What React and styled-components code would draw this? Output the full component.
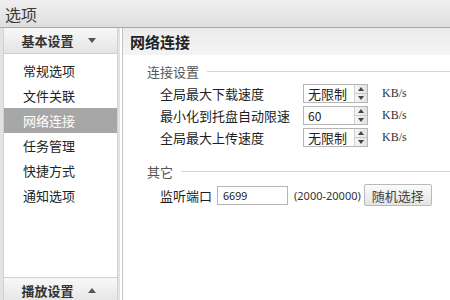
import React from 'react';
import styled, { createGlobalStyle } from 'styled-components';

const GlobalStyle = createGlobalStyle`
  html, body {
    margin: 0;
    padding: 0;
    background: #e2e2e2;
  }
  body {
    font-family: "Noto Sans CJK SC", "Noto Sans", sans-serif;
  }
`;

const Page = styled.div`
  width: 450px;
  height: 300px;
  overflow: hidden;
  display: flex;
  flex-direction: column;
`;

const TitleBar = styled.div`
  height: 27px;
  flex: none;
  display: flex;
  align-items: center;
  padding-left: 5px;
  font-size: 16px;
  color: #3a3a3a;
  background: linear-gradient(#efefef, #dedede);
  border-bottom: 1px solid #a8a8a8;
`;

const Main = styled.div`
  flex: 1;
  display: flex;
  padding-left: 3px;
  gap: 2px;
  overflow: hidden;
  background: #e2e2e2;
`;

const Sidebar = styled.div`
  width: 113px;
  height: 276px;
  flex: none;
  display: flex;
  flex-direction: column;
  background: #fff;
  border: 1px solid #d2d2d2;
  border-top: none;
`;

const GroupHeader = styled.div`
  height: 25px;
  flex: none;
  display: flex;
  align-items: center;
  justify-content: center;
  gap: 14px;
  font-size: 13px;
  font-weight: bold;
  color: #333;
  background: linear-gradient(#f8f8f8, #e4e4e4);
  border-top: ${p => (p.$bottom ? '1px solid #cfcfcf' : 'none')};
  border-bottom: 1px solid #cfcfcf;
  padding-right: 4px;
`;

const Arrow = styled.span`
  width: 0;
  height: 0;
  border-left: 4px solid transparent;
  border-right: 4px solid transparent;
  ${p => (p.$up ? 'border-bottom: 5px solid #555;' : 'border-top: 5px solid #555;')}
`;

const ItemList = styled.div`
  flex: 1;
  padding-top: 4px;
`;

const Item = styled.div`
  height: 25px;
  display: flex;
  align-items: center;
  padding-left: 19px;
  font-size: 13px;
  color: ${p => (p.$active ? '#fff' : '#222')};
  background: ${p => (p.$active ? '#a7a7a7' : 'transparent')};
`;

const Panel = styled.div`
  flex: 1;
  display: flex;
  flex-direction: column;
  background: #fff;
  border-left: 1px solid #c4c4c4;
  box-shadow: -2px 0 0 #fff;
  margin-left: 2px;
`;

const PanelHeader = styled.div`
  height: 27px;
  flex: none;
  display: flex;
  align-items: center;
  padding-left: 7px;
  font-size: 15px;
  font-weight: bold;
  color: #222;
  background: linear-gradient(#ebebeb, #f4f4f4);
`;

const PanelBody = styled.div`
  padding-left: 24px;
  display: flex;
  flex-direction: column;
`;

const Legend = styled.div`
  height: 16px;
  margin-top: ${p => p.$top}px;
  display: flex;
  align-items: center;
  gap: 8px;
  font-size: 13px;
  color: #555;
  &::after {
    content: '';
    flex: 1;
    height: 1px;
    background: #d6d6d6;
  }
`;

const Rows = styled.div`
  margin-top: 5px;
  padding-left: 13px;
  display: flex;
  flex-direction: column;
  gap: 3px;
`;

const Row = styled.div`
  height: 19px;
  display: flex;
  align-items: center;
`;

const Label = styled.span`
  width: 143px;
  font-size: 13px;
  color: #1e1e1e;
  white-space: nowrap;
`;

const SpinBox = styled.div`
  width: 63px;
  height: 17px;
  display: flex;
  border: 1px solid #b5b5b5;
  background: #fff;
`;

const SpinValue = styled.div`
  flex: 1;
  display: flex;
  align-items: center;
  padding-left: 4px;
  font-size: ${p => (p.$latin ? '12px' : '13px')};
  color: #222;
`;

const SpinButtons = styled.div`
  width: 12px;
  display: flex;
  flex-direction: column;
  border-left: 1px solid #d0d0d0;
  background: linear-gradient(90deg, #f6f6f6, #e2e2e2);
`;

const SpinHalf = styled.div`
  flex: 1;
  display: flex;
  align-items: center;
  justify-content: center;
  border-bottom: ${p => (p.$top ? '1px solid #c8c8c8' : 'none')};
`;

const Unit = styled.span`
  margin-left: 14px;
  font-family: "Liberation Serif", serif;
  font-size: 12px;
  color: #333;
`;

const PortRow = styled.div`
  margin-top: 5px;
  padding-left: 13px;
  height: 22px;
  display: flex;
  align-items: center;
`;

const PortLabel = styled.span`
  font-size: 13px;
  color: #1e1e1e;
  margin-right: 5px;
`;

const TextInput = styled.div`
  width: 64px;
  height: 17px;
  border: 1px solid #b5b5b5;
  display: flex;
  align-items: center;
  padding-left: 5px;
  font-size: 11px;
  color: #222;
`;

const Range = styled.span`
  margin-left: 6px;
  font-family: "Noto Sans", sans-serif;
  font-size: 11px;
  color: #333;
`;

const Button = styled.div`
  margin-left: 3px;
  height: 20px;
  padding: 0 7px;
  display: flex;
  align-items: center;
  font-size: 13px;
  color: #444;
  border: 1px solid #b9b9b9;
  border-radius: 2px;
  background: linear-gradient(#fbfbfb, #e4e4e4);
`;

const Tri = ({ up }) => (
  <svg width="6" height="4" viewBox="0 0 6 4">
    <path d={up ? 'M0 4 L3 0 L6 4 Z' : 'M0 0 L3 4 L6 0 Z'} fill="#444" />
  </svg>
);

const Spin = ({ value, latin }) => (
  <SpinBox>
    <SpinValue $latin={latin}>{value}</SpinValue>
    <SpinButtons>
      <SpinHalf $top>
        <Tri up />
      </SpinHalf>
      <SpinHalf>
        <Tri />
      </SpinHalf>
    </SpinButtons>
  </SpinBox>
);

const items = ['常规选项', '文件关联', '网络连接', '任务管理', '快捷方式', '通知选项'];

const speeds = [
  { label: '全局最大下载速度', value: '无限制' },
  { label: '最小化到托盘自动限速', value: '60', latin: true },
  { label: '全局最大上传速度', value: '无限制' },
];

export default function App() {
  return (
    <Page>
      <GlobalStyle />
      <TitleBar>选项</TitleBar>
      <Main>
        <Sidebar>
          <GroupHeader>
            基本设置 <Arrow />
          </GroupHeader>
          <ItemList>
            {items.map(name => (
              <Item key={name} $active={name === '网络连接'}>
                {name}
              </Item>
            ))}
          </ItemList>
          <GroupHeader $bottom>
            播放设置 <Arrow $up />
          </GroupHeader>
        </Sidebar>
        <Panel>
          <PanelHeader>网络连接</PanelHeader>
          <PanelBody>
            <Legend $top={8}>连接设置</Legend>
            <Rows>
              {speeds.map(s => (
                <Row key={s.label}>
                  <Label>{s.label}</Label>
                  <Spin value={s.value} latin={s.latin} />
                  <Unit>KB/s</Unit>
                </Row>
              ))}
            </Rows>
            <Legend $top={16}>其它</Legend>
            <PortRow>
              <PortLabel>监听端口</PortLabel>
              <TextInput>6699</TextInput>
              <Range>(2000-20000)</Range>
              <Button>随机选择</Button>
            </PortRow>
          </PanelBody>
        </Panel>
      </Main>
    </Page>
  );
}
